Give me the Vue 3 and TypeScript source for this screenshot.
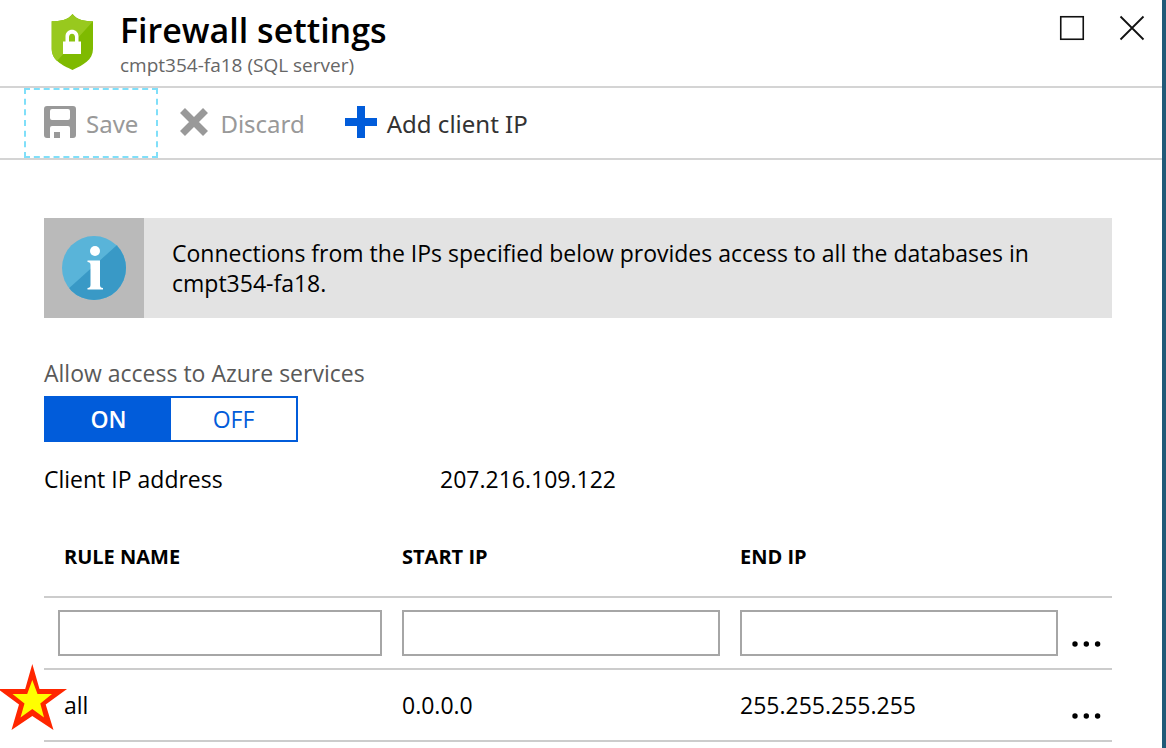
<script setup lang="ts">
import { ref } from 'vue'

interface Rule {
  name: string
  start: string
  end: string
}

const allowAzure = ref<boolean>(true)
const rules = ref<Rule[]>([{ name: 'all', start: '0.0.0.0', end: '255.255.255.255' }])
const draft = ref<Rule>({ name: '', start: '', end: '' })
</script>

<template>
  <main class="blade">
    <header class="header">
      <svg class="shield" width="44" height="58" viewBox="0 0 44 58" aria-hidden="true">
        <path d="M22.500 1C18 7 10 8.300 1.700 8.300V36C1.700 47 12 52 22.500 57 33 52 43 47 43 36V8.300C35 8.300 27 7 22.500 1z" fill="#7fba00" />
        <path d="M22.500 1C18 7 10 8.300 1.700 8.300V36c0 5 2 9 5.300 12L43 8.300C35 8.300 27 7 22.500 1z" fill="#98c91e" />
        <path d="M13 28.500h2.500V23.500C15.500 14.500 28.500 14.500 28.500 23.500V28.500H31v12.500H13z" fill="#fff" />
        <path d="M19 28.500V24C19 19.500 25 19.500 25 24v4.500z" fill="#8ac20f" />
      </svg>
      <div class="titles">
        <h1>Firewall settings</h1>
        <p>cmpt354-fa18 (SQL server)</p>
      </div>
      <div class="window-actions">
        <button type="button" aria-label="Maximize">
          <svg width="26" height="26" viewBox="0 0 26 26"><rect x="1.75" y="1.75" width="22.5" height="22.5" fill="none" stroke="#111" stroke-width="1.6" /></svg>
        </button>
        <button type="button" aria-label="Close">
          <svg width="26" height="26" viewBox="0 0 26 26"><path d="M1.5 1.5l23 23M24.500 1.500l-23 23" stroke="#111" stroke-width="1.8" /></svg>
        </button>
      </div>
    </header>

    <div class="toolbar" role="toolbar" aria-label="Commands">
      <button type="button" class="command muted focused">
        <svg width="32" height="32" viewBox="0 0 32 32" aria-hidden="true">
          <path fill-rule="evenodd" fill="#999" d="M3 0h26q3 0 3 3v26q0 3-3 3h-3V22q0-2-2-2H8q-2 0-2 2v10H3q-3 0-3-3V3q0-3 3-3zM8 3q-2 0-2 2v7q0 2 2 2h16q2 0 2-2V5q0-2-2-2zM10 26h6v6h-6z" />
        </svg>
        Save
      </button>
      <button type="button" class="command muted">
        <svg width="32" height="32" viewBox="0 0 32 32" aria-hidden="true"><path d="M4.500 4.500l23 23M27.500 4.500l-23 23" stroke="#999" stroke-width="7" /></svg>
        Discard
      </button>
      <button type="button" class="command">
        <svg width="32" height="32" viewBox="0 0 32 32" aria-hidden="true"><path d="M12 0h8v12h12v8H20v12h-8V20H0v-8h12z" fill="#015cda" /></svg>
        Add client IP
      </button>
    </div>

    <section class="content">
      <div class="notice">
        <div class="notice-icon">
          <svg width="64" height="64" viewBox="0 0 64 64" aria-hidden="true">
            <clipPath id="disc"><circle cx="32" cy="32" r="32" /></clipPath>
            <circle cx="32" cy="32" r="32" fill="#59b4d9" />
            <path d="M65 0V64H-6z" fill="#3999c6" clip-path="url(#disc)" />
            <circle cx="33" cy="15" r="5" fill="#fff" />
            <path d="M25.500 24.500H38V49q0 3 3 3v1.500H25.500V52q3 0 3-3V29q0-3-3-3z" fill="#fff" />
          </svg>
        </div>
        <p>Connections from the IPs specified below provides access to all the databases in cmpt354-fa18.</p>
      </div>

      <h2 id="azure-label">Allow access to Azure services</h2>
      <div class="switch" role="group" aria-labelledby="azure-label">
        <button type="button" :class="{ active: allowAzure }" :aria-pressed="allowAzure" @click="allowAzure = true">ON</button>
        <button type="button" :class="{ active: !allowAzure }" :aria-pressed="!allowAzure" @click="allowAzure = false">OFF</button>
      </div>

      <dl class="client">
        <dt>Client IP address</dt>
        <dd>207.216.109.122</dd>
      </dl>

      <table>
        <thead>
          <tr>
            <th scope="col">RULE NAME</th>
            <th scope="col">START IP</th>
            <th scope="col">END IP</th>
            <td class="more"></td>
          </tr>
        </thead>
        <tbody>
          <tr>
            <td class="first-field"><input v-model="draft.name" type="text" aria-label="Rule name" /></td>
            <td><input v-model="draft.start" type="text" aria-label="Start IP" /></td>
            <td><input v-model="draft.end" type="text" aria-label="End IP" /></td>
            <td class="more">
              <button type="button" aria-label="More options">
                <svg width="30" height="6" viewBox="0 0 30 6"><g fill="#000"><circle cx="3" cy="3" r="2.700" /><circle cx="14.300" cy="3" r="2.700" /><circle cx="25.600" cy="3" r="2.700" /></g></svg>
              </button>
            </td>
          </tr>
          <tr v-for="rule in rules" :key="rule.name">
            <td class="starred">
              <svg class="star" width="68" height="68" viewBox="0 0 68 68" aria-hidden="true">
                <path d="M32.300 0L39.500 25H67L45.700 40.500 53.500 66 32.300 52 11.500 66 19 40.500-2 25H25.200z" fill="#ff2600" />
                <path d="M32.300 16L37.500 30H52L40.300 39.500 44 53.500 32.300 45 20.500 53.500 24.500 39.500 12.500 30H27.200z" fill="#ffff00" />
              </svg>
              {{ rule.name }}
            </td>
            <td>{{ rule.start }}</td>
            <td>{{ rule.end }}</td>
            <td class="more">
              <button type="button" aria-label="More options">
                <svg width="30" height="6" viewBox="0 0 30 6"><g fill="#000"><circle cx="3" cy="3" r="2.700" /><circle cx="14.300" cy="3" r="2.700" /><circle cx="25.600" cy="3" r="2.700" /></g></svg>
              </button>
            </td>
          </tr>
        </tbody>
      </table>
    </section>
  </main>
</template>

<style>
body {
  margin: 0;
  background: #fff;
}
</style>

<style scoped>
* {
  box-sizing: border-box;
}
.blade {
  min-height: 100vh;
  border-right: 4px solid #215a78;
  font: 23px/30px "Open Sans", "Noto Sans", sans-serif;
  color: #000;
}
button {
  padding: 0;
  border: 0;
  background: none;
  font: inherit;
  color: inherit;
}
svg {
  display: block;
  flex: none;
}
h1, h2, p, dl, dd {
  margin: 0;
}
.header {
  display: flex;
  align-items: flex-start;
  height: 88px;
  padding: 10px 17px 0 50px;
  border-bottom: 2px solid #d4d4d4;
}
.shield {
  margin-top: 3px;
}
.titles {
  flex: 1;
  margin-left: 26px;
}
h1 {
  font-size: 34px;
  line-height: 40px;
  font-weight: 600;
}
.titles p {
  font-size: 19px;
  line-height: 30px;
  color: #666;
}
.window-actions {
  display: flex;
  gap: 34px;
  padding-top: 5px;
}
.toolbar {
  display: flex;
  height: 72px;
  padding-left: 24px;
  border-bottom: 2px solid #d4d4d4;
}
.command {
  display: flex;
  align-items: center;
  gap: 10px;
  height: 70px;
  padding: 2px 20px 0;
  font-family: "Noto Sans", "Open Sans", sans-serif;
  font-size: 24px;
  color: #333;
}
.command svg {
  margin-bottom: 4px;
}
.command.muted {
  color: #999;
}
.focused {
  padding: 2px 18px 0;
  border: 2px dashed #80dff9;
}
.content {
  padding: 58px 50px 6px 44px;
}
.notice {
  display: flex;
  min-height: 100px;
  background: #e3e3e3;
}
.notice-icon {
  display: flex;
  align-items: center;
  justify-content: center;
  width: 100px;
  flex: none;
  background: #bababa;
}
.notice p {
  padding: 20px 28px;
}
h2 {
  margin-top: 40px;
  font-size: 23px;
  line-height: 30px;
  font-weight: 400;
  color: #595959;
}
.switch {
  display: flex;
  width: 254px;
  height: 46px;
  margin-top: 8px;
  border: 2px solid #015cda;
}
.switch button {
  flex: 1;
  color: #015cda;
}
.switch .active {
  background: #015cda;
  color: #fff;
  font-weight: 600;
}
.client {
  display: flex;
  margin-top: 22px;
}
.client dt {
  width: 396px;
}
table {
  width: 100%;
  margin-top: 24px;
  border-collapse: separate;
  border-spacing: 0;
  table-layout: fixed;
}
th, td {
  height: 72px;
  padding: 0 0 0 20px;
  border-bottom: 2px solid #ccc;
  text-align: left;
  vertical-align: middle;
}
th {
  height: 80px;
  font-size: 20px;
  font-weight: 700;
}
.first-field {
  padding-left: 14px;
}
.more {
  width: 54px;
  padding: 10px 0 0 14px;
}
input {
  display: block;
  width: 100%;
  height: 46px;
  padding: 0 12px;
  border: 2px solid #a6a6a6;
  border-radius: 0;
  background: #fff;
  font: inherit;
}
.starred {
  position: relative;
}
.star {
  position: absolute;
  left: -44px;
  top: -6px;
}
</style>
